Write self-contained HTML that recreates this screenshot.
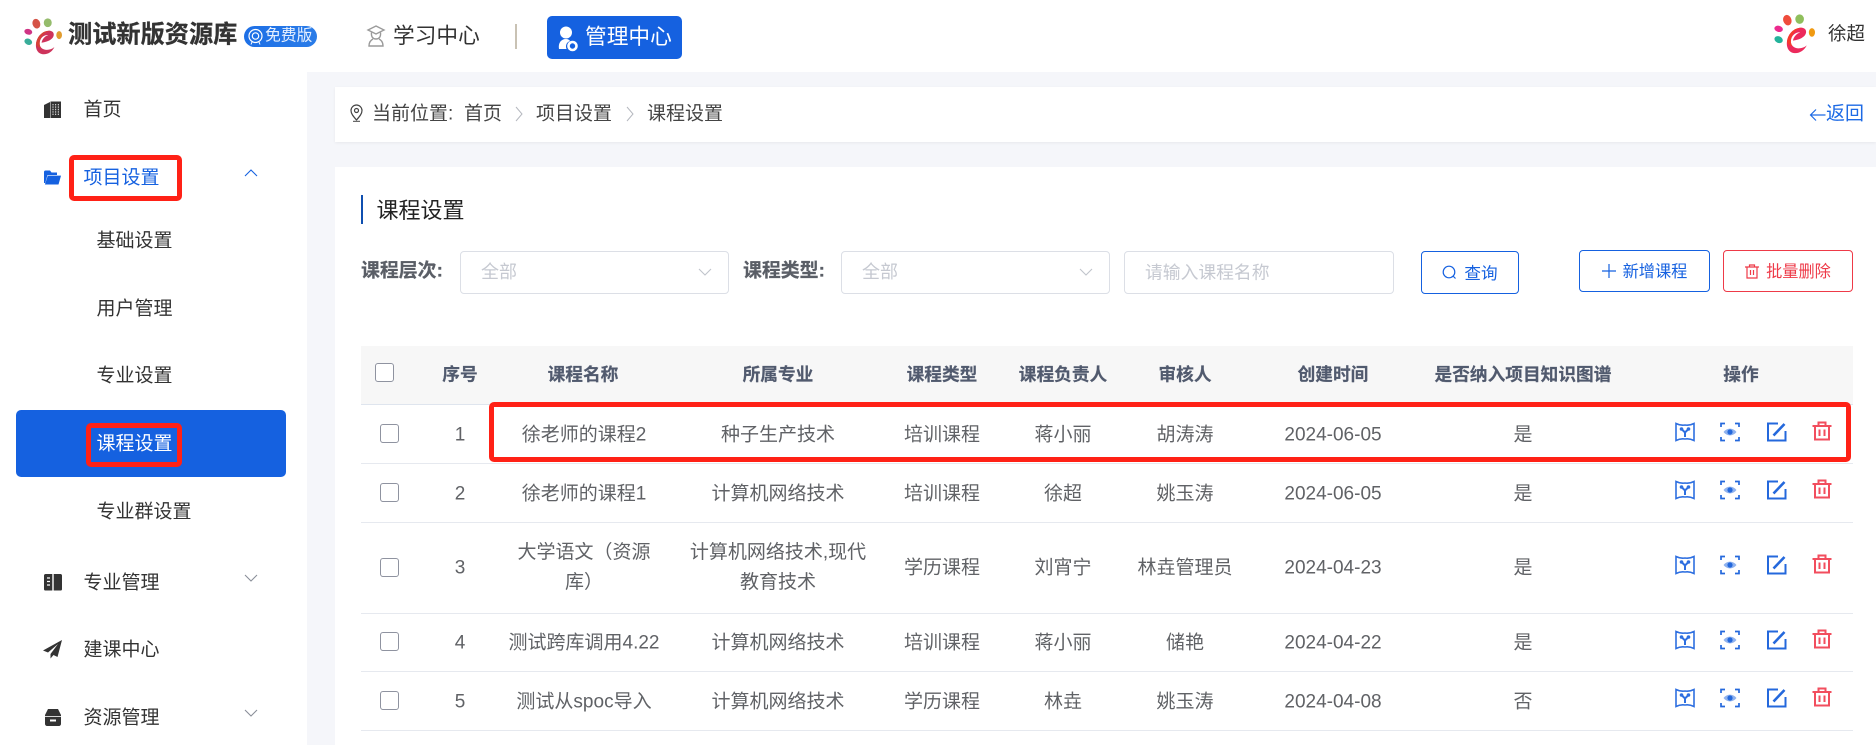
<!DOCTYPE html>
<html lang="zh-CN"><head><meta charset="utf-8"><title>课程设置</title>
<style>
*{box-sizing:border-box}
html,body{margin:0;padding:0}
body{width:1876px;height:745px;overflow:hidden;position:relative;background:#fff;font-family:"Liberation Sans","Noto Sans CJK SC",sans-serif;color:#333}
.a{position:absolute}
.t{position:absolute;white-space:nowrap;transform:translateY(-50%);line-height:1.2}
.c{position:absolute;white-space:nowrap;transform:translate(-50%,-50%);line-height:1.2;text-align:center}
.s{font-size:19px;color:#333}
.h{font-size:17.7px;font-weight:700;color:#515a6e;-webkit-text-stroke:.2px #515a6e}
.d{font-size:19px;color:#606266}
.b{font-size:19px;color:#444}
.red{position:absolute;border:5px solid #ff2116;border-radius:5px}
.cb{position:absolute;width:19px;height:19px;border:1px solid #8f93a0;border-radius:3px;background:#fff}
.l{position:absolute;left:361px;width:1492px;height:1px;background:#e6e9ef}
.box{position:absolute;background:#fff;border:1px solid #dcdfe6;border-radius:4px;height:43px}
.btn{position:absolute;background:#fff;border-radius:4px;border:1px solid #1561e0;color:#1561e0;font-size:16.2px;display:flex;align-items:center;justify-content:center;gap:7px}
.btn span{position:relative;top:-1px}
svg{position:absolute;overflow:visible}
</style></head><body>
<svg width="0" height="0" style="position:absolute">
<defs>
<symbol id="logo" viewBox="0 0 40 40">
<ellipse cx="13" cy="6" rx="4" ry="5.2" fill="#ef4c3c" transform="rotate(-18 13 6)"/>
<ellipse cx="25" cy="5" rx="4.2" ry="4.6" fill="#8fbf5c"/>
<ellipse cx="4.5" cy="14.5" rx="4.2" ry="3" fill="#ec2a8e" transform="rotate(15 4.5 14.5)"/>
<ellipse cx="4.5" cy="25" rx="4.2" ry="3.2" fill="#23b39b" transform="rotate(25 4.5 25)"/>
<ellipse cx="37" cy="18" rx="3" ry="4.2" fill="#f09a12"/>
<path d="M13 25C15 17 22 12.5 28 13.5C32 14.3 32.5 19 29 22C26 24.6 22 25.5 18.5 26C19 22.5 22 18.8 25.5 18C21 17.5 17 21 16.5 26C16 31 20 33.5 24 33.5C27 33.5 30 32.5 32 30.5C29.5 36 24 39 19 38C13.5 37 11.5 31 13 25Z" fill="#ec2a5c"/>
<path d="M13 25C15 17 22 12.5 28 13.5C24 13.5 17 18 16.5 26C16.3 28 16.8 30 18 31.5C14 31 12 28 13 25Z" fill="#f53a2c"/>
</symbol>
<symbol id="i-map" viewBox="0 0 20 20"><g fill="none" stroke="#2e6fe0" stroke-width="1.6"><path d="M1 1.5C4 3 7 3.5 10 3C13 3.5 16 3 19 1.5V18.5C16 17 13 16.500 10 17C7 16.500 4 17 1 18.500Z"/><path d="M6.500 7L10 10.500L13.500 7M10 10.500V15" stroke-width="2"/></g><circle cx="6.500" cy="7" r="1.800" fill="#2e6fe0"/><circle cx="13.500" cy="7" r="1.800" fill="#2e6fe0"/></symbol>
<symbol id="i-eye" viewBox="0 0 20 20"><path d="M1 5V1.500H5M15 1.500H19V5M19 15V18.500H15M5 18.500H1V15" fill="none" stroke="#2468dc" stroke-width="1.700"/><path d="M3.500 10C7 5.500 13 5.500 16.500 10C13 14.500 7 14.500 3.500 10Z" fill="#8fb2ee"/><circle cx="10" cy="10" r="2.600" fill="#2468dc"/></symbol>
<symbol id="i-edit" viewBox="0 0 20 20"><path d="M11 1.500H1V18.500H18.500V9" fill="none" stroke="#2468dc" stroke-width="2"/><path d="M6.500 13.500L17.500 2" fill="none" stroke="#2468dc" stroke-width="2.600"/></symbol>
<symbol id="i-del" viewBox="0 0 20 20"><g fill="none" stroke="#f24e5e" stroke-width="2"><path d="M.5 5H19.500M6.500 5V1.500H13.500V5M3 5V18.500H17V5M7.500 8.500V15M12.500 8.500V15"/></g></symbol>
<symbol id="chev" viewBox="0 0 14 8"><path d="M1 1L7 7L13 1" fill="none" stroke="currentColor" stroke-width="1.100"/></symbol>
</defs></svg>

<!-- backgrounds -->
<div class="a" style="left:307px;top:72px;width:1569px;height:673px;background:#f5f6fa"></div>
<div class="a" style="left:335px;top:87px;width:1541px;height:55px;background:#fff;box-shadow:0 1px 3px rgba(0,0,0,.06)"></div>
<div class="a" style="left:335px;top:167px;width:1541px;height:578px;background:#fff"></div>

<!-- header -->
<svg style="left:24px;top:18px;filter:saturate(.8)" width="38" height="38"><use href="#logo"/></svg>
<div class="t" style="left:68px;top:35px;font-size:24.2px;font-weight:700;color:#333;-webkit-text-stroke:.3px #333">测试新版资源库</div>
<div class="a" style="left:244px;top:26px;width:73px;height:21px;border-radius:11px;background:linear-gradient(90deg,#1d6fe6,#2a7ce8)"></div>
<svg style="left:247px;top:28px" width="17" height="17" viewBox="0 0 17 17"><circle cx="8.500" cy="8" r="6.500" fill="none" stroke="#fff" stroke-width="1.200"/><circle cx="8.500" cy="8" r="3.200" fill="none" stroke="#fff" stroke-width="1.200"/><path d="M5 14L4 16.500M12 14L13 16.500" stroke="#fff"/></svg>
<div class="t" style="left:265px;top:36.500px;font-size:15.800px;color:#e6f0ff">免费版</div>
<svg style="left:367px;top:25px" width="18" height="22" viewBox="0 0 18 22"><g fill="none" stroke="#9a9a9a" stroke-width="1.400"><path d="M9 1L17 5L9 9L1 5Z"/><path d="M4.500 7.500C4 12 6 14 9 14C12 14 14 12 13.500 7.500"/><path d="M6 14C3 15.500 2 18 2 21H16C16 18 15 15.500 12 14"/></g></svg>
<div class="t" style="left:393px;top:36px;font-size:21.700px;color:#333">学习中心</div>
<div class="a" style="left:515px;top:24px;width:2px;height:25px;background:#c9c2b4"></div>
<div class="a" style="left:547px;top:16px;width:135px;height:43px;background:#1561e0;border-radius:5px"></div>
<svg style="left:558px;top:26px" width="20" height="26" viewBox="0 0 20 26"><circle cx="8" cy="6.500" r="6" fill="#fff"/><path d="M1 23C0 17 3 13 8 13C10 13 11.500 14 12 15C9 16 7 19 8.500 23Z" fill="#fff"/><circle cx="14.500" cy="20" r="4" fill="none" stroke="#fff" stroke-width="2.600"/></svg>
<div class="t" style="left:585px;top:37px;font-size:21.700px;color:#fff">管理中心</div>
<svg style="left:1774px;top:14px" width="41" height="41"><use href="#logo"/></svg>
<div class="t" style="left:1828px;top:34px;font-size:18.500px;color:#333">徐超</div>

<!-- sidebar -->
<div class="a" style="left:16px;top:410px;width:270px;height:67px;background:#1561e0;border-radius:5px"></div>
<svg style="left:44px;top:101px" width="17" height="17" viewBox="0 0 17 17"><path d="M0 4L6 1V17H0Z" fill="#333"/><path d="M6.500 0.500H17V17H6.500Z" fill="#333"/><path d="M9 3V15M11.700 3V15M14.300 3V15" stroke="#fff" stroke-width=".9" stroke-dasharray="1.400 1"/></svg>
<svg style="left:44px;top:170px" width="17" height="15" viewBox="0 0 17 15"><path d="M0 2C0 1 .7.500 1.500.500H6L7.500 2.500H13V5H3.500L1.200 13H0Z" fill="#1561e0"/><path d="M3.800 5.600H17L14.500 14.500H.9Z" fill="#1561e0"/></svg>
<svg style="left:44px;top:574px" width="18" height="17" viewBox="0 0 18 17"><path d="M0 1.500C0 .7.700 0 1.500 0H8.300V16.500H1.500C.7 16.500 0 16 0 15.200Z" fill="#333"/><path d="M9.700 0H16.500C17.300 0 18 .7 18 1.500V15.200C18 16 17.300 16.500 16.500 16.500H9.700Z" fill="#333"/><path d="M3 4H6M3 7.500H6M3 11H6" stroke="#fff" stroke-width="1.200"/></svg>
<svg style="left:43px;top:640px" width="19" height="19" viewBox="0 0 19 19"><path d="M19 0L0 10.500L5 12.500L15 4L7.500 14V18.500L10.500 15L14.500 17Z" fill="#333"/></svg>
<svg style="left:45px;top:709px" width="16" height="17" viewBox="0 0 16 17"><path d="M3 0H13L16 6V15C16 16 15 17 14 17H2C1 17 0 16 0 15V6Z" fill="#333"/><path d="M0 7.500H16" stroke="#fff" stroke-width=".8"/><rect x="5" y="10.500" width="6" height="2" fill="#fff"/></svg>

<div class="t s" style="left:83.500px;top:111px">首页</div>
<div class="t s" style="left:83.500px;top:179px;color:#1561e0">项目设置</div>
<div class="t s" style="left:96.500px;top:242px">基础设置</div>
<div class="t s" style="left:96.500px;top:310px">用户管理</div>
<div class="t s" style="left:96.500px;top:377px">专业设置</div>
<div class="t s" style="left:96.500px;top:445px;color:#fff">课程设置</div>
<div class="t s" style="left:96.500px;top:513px">专业群设置</div>
<div class="t s" style="left:83.500px;top:584px">专业管理</div>
<div class="t s" style="left:83.500px;top:651px">建课中心</div>
<div class="t s" style="left:83.500px;top:719px">资源管理</div>
<svg style="left:244px;top:169px;color:#1561e0;transform:scaleY(-1)" width="14" height="8"><use href="#chev"/></svg>
<svg style="left:244px;top:574px;color:#8a8f99" width="14" height="8"><use href="#chev"/></svg>
<svg style="left:244px;top:709px;color:#8a8f99" width="14" height="8"><use href="#chev"/></svg>

<!-- breadcrumb -->
<svg style="left:350px;top:104px" width="13" height="18" viewBox="0 0 13 18"><path d="M6.500 16C3 12 1 9.500 1 6.500C1 3.500 3.500 1 6.500 1C9.500 1 12 3.500 12 6.500C12 9.500 10 12 6.500 16Z" fill="none" stroke="#444" stroke-width="1.200"/><circle cx="6.500" cy="6.500" r="2" fill="none" stroke="#444" stroke-width="1.200"/><path d="M3 17.300H10" stroke="#444"/></svg>
<div class="t b" style="left:372px;top:115px">当前位置:</div>
<div class="t b" style="left:464px;top:115px">首页</div>
<svg style="left:515px;top:106px" width="8" height="16" viewBox="0 0 8 16"><path d="M1 1L7 8L1 15" fill="none" stroke="#b5b8bf" stroke-width="1"/></svg>
<div class="t b" style="left:536px;top:115px">项目设置</div>
<svg style="left:626px;top:106px" width="8" height="16" viewBox="0 0 8 16"><path d="M1 1L7 8L1 15" fill="none" stroke="#b5b8bf" stroke-width="1"/></svg>
<div class="t b" style="left:647px;top:115px">课程设置</div>
<svg style="left:1809px;top:108px" width="17" height="14" viewBox="0 0 17 14"><path d="M16.500 7H1.500M7 1.500L1.500 7L7 12.500" fill="none" stroke="#1d6ae5" stroke-width="1.200"/></svg>
<div class="t" style="left:1826px;top:114.500px;font-size:19px;color:#1d6ae5">返回</div>

<!-- title -->
<div class="a" style="left:361px;top:195px;width:2px;height:29px;background:#0f4fb0"></div>
<div class="t" style="left:376.500px;top:210.500px;font-size:22px;color:#222">课程设置</div>

<!-- filters -->
<div class="t" style="left:361px;top:272px;font-size:18.900px;font-weight:700;color:#5a5e66;-webkit-text-stroke:.2px #5a5e66">课程层次:</div>
<div class="box" style="left:460px;top:251px;width:269px"></div>
<div class="t" style="left:481px;top:272.500px;font-size:18px;color:#c6c9d1">全部</div>
<svg style="left:698px;top:268px;color:#c0c4cc" width="14" height="8"><use href="#chev"/></svg>
<div class="t" style="left:743px;top:272px;font-size:18.900px;font-weight:700;color:#5a5e66;-webkit-text-stroke:.2px #5a5e66">课程类型:</div>
<div class="box" style="left:841px;top:251px;width:269px"></div>
<div class="t" style="left:862px;top:272.500px;font-size:18px;color:#c6c9d1">全部</div>
<svg style="left:1079px;top:268px;color:#c0c4cc" width="14" height="8"><use href="#chev"/></svg>
<div class="box" style="left:1123.500px;top:251px;width:270.500px"></div>
<div class="t" style="left:1145px;top:272.500px;font-size:17.800px;color:#c6c9d1">请输入课程名称</div>
<div class="btn" style="left:1421px;top:251px;width:98px;height:43px;font-size:16.600px"><svg style="position:static" width="15" height="15" viewBox="0 0 15 15"><circle cx="7" cy="7" r="5.800" fill="none" stroke="#1561e0" stroke-width="1.200"/><path d="M11 11L13.500 13.500" stroke="#1561e0" stroke-width="1.200"/></svg><span>查询</span></div>
<div class="btn" style="left:1579px;top:250px;width:131px;height:42px"><svg style="position:static" width="14" height="14" viewBox="0 0 14 14"><path d="M7 0V14M0 7H14" stroke="#1561e0" stroke-width="1.200"/></svg><span>新增课程</span></div>
<div class="btn" style="left:1723px;top:250px;width:130px;height:42px;border-color:#ee3a48;color:#ee3a48"><svg style="position:static" width="14" height="15" viewBox="0 0 14 15"><path d="M0 3H14M4.500 3V1H9.500V3M2 3V14H12V3M5.500 6V11M8.500 6V11" fill="none" stroke="#ee3a48" stroke-width="1.200"/></svg><span>批量删除</span></div>

<!-- table -->
<div class="a" style="left:361px;top:346px;width:1492px;height:58px;background:#f7f7f7"></div>
<div class="l" style="top:404px;background:#dfe5ee"></div>
<div class="l" style="top:463px"></div>
<div class="l" style="top:522px"></div>
<div class="l" style="top:613px"></div>
<div class="l" style="top:671px"></div>
<div class="l" style="top:730px"></div>

<div class="cb" style="left:375px;top:363px"></div>
<div class="c h" style="left:460px;top:375px">序号</div>
<div class="c h" style="left:583px;top:375px">课程名称</div>
<div class="c h" style="left:778px;top:375px">所属专业</div>
<div class="c h" style="left:942px;top:375px">课程类型</div>
<div class="c h" style="left:1063px;top:375px">课程负责人</div>
<div class="c h" style="left:1185px;top:375px">审核人</div>
<div class="c h" style="left:1333px;top:375px">创建时间</div>
<div class="c h" style="left:1523px;top:375px">是否纳入项目知识图谱</div>
<div class="c h" style="left:1741px;top:375px">操作</div>

<!-- row 1 -->
<div class="cb" style="left:380px;top:424px"></div>
<div class="c d" style="left:460px;top:436px">1</div>
<div class="c d" style="left:584px;top:436px">徐老师的课程2</div>
<div class="c d" style="left:778px;top:436px">种子生产技术</div>
<div class="c d" style="left:942px;top:436px">培训课程</div>
<div class="c d" style="left:1063px;top:436px">蒋小丽</div>
<div class="c d" style="left:1185px;top:436px">胡涛涛</div>
<div class="c d" style="left:1333px;top:436px">2024-06-05</div>
<div class="c d" style="left:1523px;top:436px">是</div>
<!-- row 2 -->
<div class="cb" style="left:380px;top:483px"></div>
<div class="c d" style="left:460px;top:495px">2</div>
<div class="c d" style="left:584px;top:495px">徐老师的课程1</div>
<div class="c d" style="left:778px;top:495px">计算机网络技术</div>
<div class="c d" style="left:942px;top:495px">培训课程</div>
<div class="c d" style="left:1063px;top:495px">徐超</div>
<div class="c d" style="left:1185px;top:495px">姚玉涛</div>
<div class="c d" style="left:1333px;top:495px">2024-06-05</div>
<div class="c d" style="left:1523px;top:495px">是</div>
<!-- row 3 -->
<div class="cb" style="left:380px;top:558px"></div>
<div class="c d" style="left:460px;top:569px">3</div>
<div class="c d" style="left:584px;top:568px;line-height:30px">大学语文（资源<br>库）</div>
<div class="c d" style="left:778px;top:568px;line-height:30px">计算机网络技术,现代<br>教育技术</div>
<div class="c d" style="left:942px;top:569px">学历课程</div>
<div class="c d" style="left:1063px;top:569px">刘宵宁</div>
<div class="c d" style="left:1185px;top:569px">林垚管理员</div>
<div class="c d" style="left:1333px;top:569px">2024-04-23</div>
<div class="c d" style="left:1523px;top:569px">是</div>
<!-- row 4 -->
<div class="cb" style="left:380px;top:632px"></div>
<div class="c d" style="left:460px;top:644px">4</div>
<div class="c d" style="left:584px;top:644px">测试跨库调用4.22</div>
<div class="c d" style="left:778px;top:644px">计算机网络技术</div>
<div class="c d" style="left:942px;top:644px">培训课程</div>
<div class="c d" style="left:1063px;top:644px">蒋小丽</div>
<div class="c d" style="left:1185px;top:644px">储艳</div>
<div class="c d" style="left:1333px;top:644px">2024-04-22</div>
<div class="c d" style="left:1523px;top:644px">是</div>
<!-- row 5 -->
<div class="cb" style="left:380px;top:691px"></div>
<div class="c d" style="left:460px;top:703px">5</div>
<div class="c d" style="left:584px;top:703px">测试从spoc导入</div>
<div class="c d" style="left:778px;top:703px">计算机网络技术</div>
<div class="c d" style="left:942px;top:703px">学历课程</div>
<div class="c d" style="left:1063px;top:703px">林垚</div>
<div class="c d" style="left:1185px;top:703px">姚玉涛</div>
<div class="c d" style="left:1333px;top:703px">2024-04-08</div>
<div class="c d" style="left:1523px;top:703px">否</div>

<!-- action icons -->
<svg style="left:1675px;top:422px" width="20" height="20"><use href="#i-map"/></svg><svg style="left:1720px;top:422px" width="20" height="20"><use href="#i-eye"/></svg><svg style="left:1767px;top:422px" width="20" height="20"><use href="#i-edit"/></svg><svg style="left:1812px;top:421px" width="20" height="20"><use href="#i-del"/></svg>
<svg style="left:1675px;top:480px" width="20" height="20"><use href="#i-map"/></svg><svg style="left:1720px;top:480px" width="20" height="20"><use href="#i-eye"/></svg><svg style="left:1767px;top:480px" width="20" height="20"><use href="#i-edit"/></svg><svg style="left:1812px;top:479px" width="20" height="20"><use href="#i-del"/></svg>
<svg style="left:1675px;top:555px" width="20" height="20"><use href="#i-map"/></svg><svg style="left:1720px;top:555px" width="20" height="20"><use href="#i-eye"/></svg><svg style="left:1767px;top:555px" width="20" height="20"><use href="#i-edit"/></svg><svg style="left:1812px;top:554px" width="20" height="20"><use href="#i-del"/></svg>
<svg style="left:1675px;top:630px" width="20" height="20"><use href="#i-map"/></svg><svg style="left:1720px;top:630px" width="20" height="20"><use href="#i-eye"/></svg><svg style="left:1767px;top:630px" width="20" height="20"><use href="#i-edit"/></svg><svg style="left:1812px;top:629px" width="20" height="20"><use href="#i-del"/></svg>
<svg style="left:1675px;top:688px" width="20" height="20"><use href="#i-map"/></svg><svg style="left:1720px;top:688px" width="20" height="20"><use href="#i-eye"/></svg><svg style="left:1767px;top:688px" width="20" height="20"><use href="#i-edit"/></svg><svg style="left:1812px;top:687px" width="20" height="20"><use href="#i-del"/></svg>

<!-- red annotation boxes -->
<div class="red" style="left:69px;top:155px;width:113px;height:46px"></div>
<div class="red" style="left:86px;top:423px;width:96px;height:44px"></div>
<div class="red" style="left:489px;top:402px;width:1362px;height:60px"></div>
</body></html>
